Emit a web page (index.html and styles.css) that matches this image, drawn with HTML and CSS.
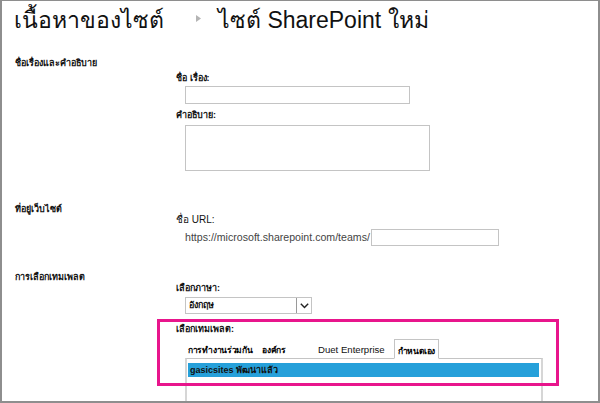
FILE: index.html
```html
<!DOCTYPE html>
<html lang="th">
<head>
<meta charset="utf-8">
<link rel="stylesheet" href="styles.css">
</head>
<body>
<div class="frame">
  <header class="title-row">
    <span class="title-main">เนื้อหาของไซต์</span>
    <svg class="crumb" width="5" height="7" viewBox="0 0 5 7"><polygon points="0,0 5,3.5 0,7" fill="#b4b4b4"/></svg>
    <span class="title-sub">ไซต์ SharePoint ใหม่</span>
  </header>

  <section class="sec sec-1">
    <div class="sec-label">ชื่อเรื่องและคำอธิบาย</div>
    <div class="sec-body">
      <div class="fld-label">ชื่อ เรื่อง:</div>
      <div class="input input-title"></div>
      <div class="fld-label fld-desc">คำอธิบาย:</div>
      <div class="textarea"></div>
    </div>
  </section>

  <section class="sec sec-2">
    <div class="sec-label">ที่อยู่เว็บไซต์</div>
    <div class="sec-body">
      <div class="fld-label">ชื่อ URL:</div>
      <div class="url-row">
        <span class="url-prefix">https://microsoft.sharepoint.com/teams/</span>
        <div class="input input-url"></div>
      </div>
    </div>
  </section>

  <section class="sec sec-3">
    <div class="sec-label">การเลือกเทมเพลต</div>
    <div class="sec-body">
      <div class="fld-label">เลือกภาษา:</div>
      <div class="select">
        <span class="select-value">อังกฤษ</span>
        <span class="select-btn"><svg width="9" height="6" viewBox="0 0 9 6"><polyline points="0.8,0.8 4.5,4.6 8.2,0.8" fill="none" stroke="#222" stroke-width="1.4"/></svg></span>
      </div>
      <div class="fld-label fld-tpl">เลือกเทมเพลต:</div>
      <div class="tabs">
        <span class="tab tab-1">การทำงานร่วมกัน</span>
        <span class="tab tab-2">องค์กร</span>
        <span class="tab tab-3">Duet Enterprise</span>
        <span class="tab tab-4 active">กำหนดเอง</span>
      </div>
      <div class="listbox">
        <div class="list-item selected">gasicsites พัฒนาแล้ว</div>
      </div>
    </div>
  </section>

  <div class="highlight"></div>
</div>
</body>
</html>
```

FILE: styles.css
```css
* { box-sizing: border-box; }
html, body { margin: 0; padding: 0; background: #fff; }
body {
  font-family: "Liberation Sans", "Noto Sans", sans-serif;
  color: #111;
  overflow: hidden;
}
.frame {
  position: relative;
  width: 600px;
  height: 403px;
  border: 2px solid #8e8e8e;
  border-top-width: 1px;
  padding-left: 13px;
  overflow: hidden;
}
.title-row {
  display: flex;
  align-items: center;
  height: 38px;
  white-space: nowrap;
}
.title-main {
  font-size: 23px;
  line-height: 30px;
  color: #111;
  margin-left: -1px;
}
.crumb { margin-left: 32px; margin-right: 17px; margin-top: -4px; }
.title-sub {
  font-family: "Liberation Sans", sans-serif;
  font-size: 23px;
  line-height: 30px;
  color: #111;
}
.sec {
  display: grid;
  grid-template-columns: 161px 1fr;
}
.sec-1 { margin-top: 17px; }
.sec-2 { margin-top: 31px; }
.sec-3 { margin-top: 23px; }
.sec-label {
  font-size: 9px;
  line-height: 14px;
  color: #111;
  font-weight: bold;
}
.sec-body { padding-top: 15px; }
.sec-2 .sec-body, .sec-3 .sec-body { padding-top: 11px; }
.fld-label {
  font-size: 9px;
  line-height: 14px;
  font-weight: bold;
  color: #111;
}
.sec-2 .fld-label { font-weight: normal; font-size: 10px; }
.input {
  height: 18px;
  border: 1px solid #c4c4c4;
  background: #fff;
}
.input-title { margin: 1px 0 0 9px; width: 225px; }
.fld-desc { margin-top: 4px; }
.textarea {
  margin: 3px 0 0 9px;
  width: 245px;
  height: 46px;
  border: 1px solid #c4c4c4;
}
.url-row {
  display: flex;
  align-items: center;
  height: 20px;
  margin-left: 9px;
}
.url-prefix {
  font-family: "Liberation Sans", sans-serif;
  font-size: 10.6px;
  color: #444;
  white-space: nowrap;
}
.input-url { width: 128px; height: 17px; margin-left: 1px; }
.select {
  display: flex;
  margin: 2px 0 0 9px;
  width: 127px;
  height: 17px;
  border: 1px solid #c4c4c4;
}
.select-value {
  flex: 1;
  font-size: 9px;
  line-height: 15px;
  padding-left: 3px;
  font-weight: bold;
}
.select-btn {
  width: 15px;
  border-left: 1px solid #9a9a9a;
  display: flex;
  align-items: center;
  justify-content: center;
  background: #fff;
}
.fld-tpl { margin-top: 8px; }
.tabs {
  display: flex;
  height: 19px;
  margin-top: 3px;
  margin-left: 9px;
  width: 358px;
}
.tab {
  font-size: 8.5px;
  line-height: 18px;
  padding-top: 2px;
  white-space: nowrap;
  color: #000;
  font-weight: 600;
}
.tab-1 { width: 73px; padding-left: 3px; letter-spacing: -0.3px; }
.tab-2 { width: 54px; padding-left: 4px; letter-spacing: -0.2px; }
.tab-3 {
  width: 82px;
  padding-left: 6px;
  font-family: "Liberation Sans", sans-serif;
  font-weight: normal;
  font-size: 9.6px;
  color: #111;
}
.tab-4 {
  width: 45px;
  border: 1px solid #c4c4c4;
  border-bottom: 1px solid #fff;
  background: #fff;
  text-align: center;
  margin-bottom: -1px;
  position: relative;
  z-index: 1;
  letter-spacing: -0.4px;
}
.listbox {
  margin-left: 9px;
  width: 358px;
  height: 60px;
  border-style: solid;
  border-width: 1px 2px 0 2px;
  border-color: #c4c4c4 #d6d6d6 #d6d6d6 #d6d6d6;
  padding: 4px 2px 0 1px;
}
.list-item {
  height: 14px;
  font-size: 9px;
  line-height: 14px;
  padding-left: 2px;
  font-weight: bold;
  color: #111;
}
.list-item.selected { background: #26a0da; }
.highlight {
  position: absolute;
  left: 155px;
  top: 318px;
  width: 402px;
  height: 67px;
  border: 3px solid #e8158c;
  pointer-events: none;
}
```
